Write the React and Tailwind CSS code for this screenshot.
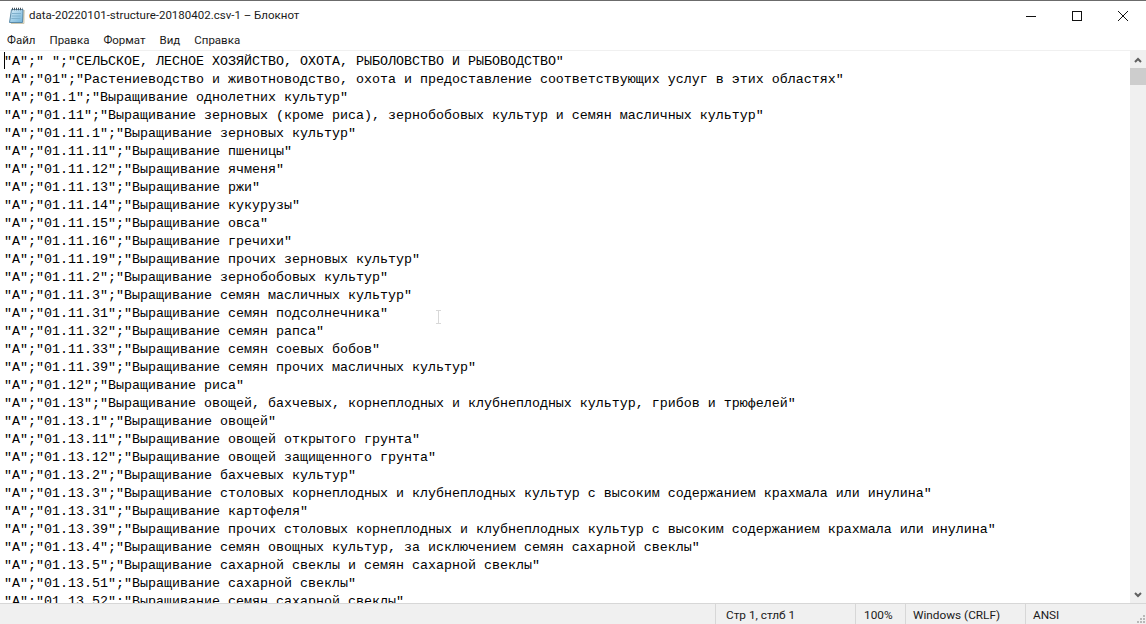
const lines = [
  '"А";" ";"СЕЛЬСКОЕ, ЛЕСНОЕ ХОЗЯЙСТВО, ОХОТА, РЫБОЛОВСТВО И РЫБОВОДСТВО"',
  '"А";"01";"Растениеводство и животноводство, охота и предоставление соответствующих услуг в этих областях"',
  '"А";"01.1";"Выращивание однолетних культур"',
  '"А";"01.11";"Выращивание зерновых (кроме риса), зернобобовых культур и семян масличных культур"',
  '"А";"01.11.1";"Выращивание зерновых культур"',
  '"А";"01.11.11";"Выращивание пшеницы"',
  '"А";"01.11.12";"Выращивание ячменя"',
  '"А";"01.11.13";"Выращивание ржи"',
  '"А";"01.11.14";"Выращивание кукурузы"',
  '"А";"01.11.15";"Выращивание овса"',
  '"А";"01.11.16";"Выращивание гречихи"',
  '"А";"01.11.19";"Выращивание прочих зерновых культур"',
  '"А";"01.11.2";"Выращивание зернобобовых культур"',
  '"А";"01.11.3";"Выращивание семян масличных культур"',
  '"А";"01.11.31";"Выращивание семян подсолнечника"',
  '"А";"01.11.32";"Выращивание семян рапса"',
  '"А";"01.11.33";"Выращивание семян соевых бобов"',
  '"А";"01.11.39";"Выращивание семян прочих масличных культур"',
  '"А";"01.12";"Выращивание риса"',
  '"А";"01.13";"Выращивание овощей, бахчевых, корнеплодных и клубнеплодных культур, грибов и трюфелей"',
  '"А";"01.13.1";"Выращивание овощей"',
  '"А";"01.13.11";"Выращивание овощей открытого грунта"',
  '"А";"01.13.12";"Выращивание овощей защищенного грунта"',
  '"А";"01.13.2";"Выращивание бахчевых культур"',
  '"А";"01.13.3";"Выращивание столовых корнеплодных и клубнеплодных культур с высоким содержанием крахмала или инулина"',
  '"А";"01.13.31";"Выращивание картофеля"',
  '"А";"01.13.39";"Выращивание прочих столовых корнеплодных и клубнеплодных культур с высоким содержанием крахмала или инулина"',
  '"А";"01.13.4";"Выращивание семян овощных культур, за исключением семян сахарной свеклы"',
  '"А";"01.13.5";"Выращивание сахарной свеклы и семян сахарной свеклы"',
  '"А";"01.13.51";"Выращивание сахарной свеклы"',
  '"А";"01.13.52";"Выращивание семян сахарной свеклы"',
];

const menu = ['Файл', 'Правка', 'Формат', 'Вид', 'Справка'];

function NotepadIcon() {
  return (
    <svg width="18" height="18" viewBox="0 0 18 18" className="shrink-0">
      <defs>
        <linearGradient id="pad" x1="0" y1="0" x2="1" y2="1">
          <stop offset="0" stopColor="#d6ecf8" />
          <stop offset="1" stopColor="#6fb2d8" />
        </linearGradient>
      </defs>
      <path d="M3 16.5 L16 16.5 L16 3 L15 16" fill="none" stroke="#cfc9b0" strokeWidth="1" />
      <path d="M3.5 2.5 L15 2.5 L14.5 15.5 L1.5 15.5 Z" fill="url(#pad)" stroke="#5a8aa8" strokeWidth="1" />
      <path d="M4 6.5h9M3.7 9h9M3.4 11.5h9" stroke="#7fb0cc" strokeWidth="1" />
      <path d="M4 2h10.5" stroke="#44525c" strokeWidth="2.4" strokeDasharray="1 1" />
    </svg>
  );
}

export default function App() {
  return (
    <div className="w-[1146px] h-[624px] flex flex-col overflow-hidden bg-white border-t border-[#6b6b6b] text-black font-['Liberation_Sans',sans-serif]">
      {/* Title bar */}
      <div className="h-[30px] shrink-0 flex items-center">
        <div className="ml-[8px] mr-[3px] flex items-center"><NotepadIcon /></div>
        <span className="text-[11.5px] font-['Roboto',sans-serif] text-[#1a1a1a]">data-20220101-structure-20180402.csv-1 – Блокнот</span>
        <div className="ml-auto flex items-center">
          <div className="w-[46px] h-[30px] flex items-center justify-center">
            <svg width="10" height="10" viewBox="0 0 10 10"><path d="M0 5.5h10" stroke="#111" strokeWidth="1" /></svg>
          </div>
          <div className="w-[46px] h-[30px] flex items-center justify-center">
            <svg width="10" height="10" viewBox="0 0 10 10"><rect x="0.5" y="0.5" width="9" height="9" fill="none" stroke="#111" /></svg>
          </div>
          <div className="w-[46px] h-[30px] flex items-center justify-center">
            <svg width="10" height="10" viewBox="0 0 10 10"><path d="M0 0L10 10M10 0L0 10" stroke="#111" strokeWidth="1" /></svg>
          </div>
        </div>
      </div>
      {/* Menu bar */}
      <div className="h-[19px] shrink-0 flex items-center pl-[7px] gap-[14px] text-[11.5px] font-['Roboto',sans-serif] text-[#1a1a1a]">
        {menu.map((m) => <span key={m}>{m}</span>)}
      </div>
      <div className="h-px shrink-0 bg-[#f0f0f0]" />
      {/* Editor */}
      <div className="relative flex-1 min-h-0 flex">
        <div className="flex-1 min-w-0 overflow-hidden pl-[4px] pt-[2px] font-['Liberation_Mono',monospace] text-[13.33px] leading-[18px] text-black whitespace-pre">
          {lines.map((l, i) => <div key={i} className="h-[18px]">{l}</div>)}
        </div>
        <div className="w-[16px] shrink-0 bg-[#f0f0f0] flex flex-col">
          <div className="h-[17px] flex items-center justify-center">
            <svg width="8" height="6" viewBox="0 0 8 6"><path d="M1 5L4 2L7 5" fill="none" stroke="#606060" strokeWidth="2" /></svg>
          </div>
          <div className="h-[17px] bg-[#cdcdcd]" />
          <div className="flex-1" />
          <div className="h-[17px] flex items-center justify-center">
            <svg width="8" height="6" viewBox="0 0 8 6"><path d="M1 1L4 4L7 1" fill="none" stroke="#606060" strokeWidth="2" /></svg>
          </div>
        </div>
        <div className="absolute left-[4px] top-px w-px h-[17px] bg-black" />
        <svg className="absolute left-[435px] top-[259px]" width="7" height="14" viewBox="0 0 7 14">
          <path d="M1 0.5h5M3.5 0.5v13M1 13.5h5" fill="none" stroke="#d8d8d8" />
        </svg>
      </div>
      {/* Status bar */}
      <div className="h-[21px] shrink-0 relative flex bg-[#f0f0f0] border-t border-[#d7d7d7] text-[11.8px] font-['Roboto',sans-serif] text-[#1a1a1a]">
        <div className="w-[715px] shrink-0" />
        <div className="w-[140px] shrink-0 border-l border-[#d7d7d7] pl-[10px] pt-[3px] flex items-center">Стр 1, стлб 1</div>
        <div className="w-[50px] shrink-0 border-l border-[#d7d7d7] pl-[8px] pt-[3px] flex items-center">100%</div>
        <div className="w-[120px] shrink-0 border-l border-[#d7d7d7] pl-[7px] pt-[3px] flex items-center">Windows (CRLF)</div>
        <div className="flex-1 border-l border-[#d7d7d7] pl-[7px] pt-[3px] flex items-center">ANSI</div>
        <svg className="absolute right-0 bottom-0" width="12" height="12" viewBox="0 0 12 12">
          <path d="M9 3h2v2H9zM6 6h2v2H6zM9 6h2v2H9zM3 9h2v2H3zM6 9h2v2H6zM9 9h2v2H9z" fill="#b8b8b8" />
        </svg>
      </div>
    </div>
  );
}
